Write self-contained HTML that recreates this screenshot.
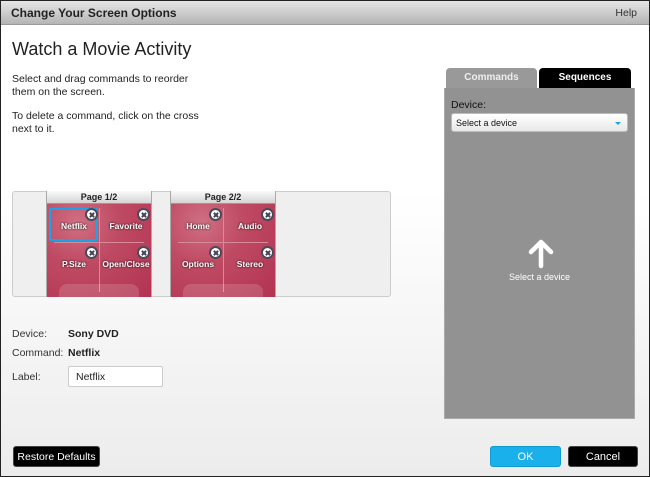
<!DOCTYPE html>
<html><head><meta charset="utf-8"><style>
*{margin:0;padding:0;box-sizing:border-box}
body{width:650px;height:477px;overflow:hidden;font-family:"Liberation Sans",Arial,sans-serif;background:#222}
#w{position:absolute;left:1px;top:1px;width:648px;height:475px;background:linear-gradient(#fff 0%,#fff 40%,#ececec 100%);overflow:hidden}
.a{position:absolute}
#tb{left:0;top:0;width:648px;height:24px;background:linear-gradient(#e6e6e6,#b4b4b4);border-bottom:1px solid #999}
.t{font-size:10.5px;color:#222}
.page{position:absolute;top:190px;width:106px;height:106px;border:1px solid #aaa;border-top:none}
.ph{position:absolute;left:0;top:0;width:104px;height:13px;background:linear-gradient(#fafafa,#d4d4d4);border-bottom:1px solid #999;font-size:9px;font-weight:bold;text-align:center;line-height:13px;color:#222}
.pr{position:absolute;left:0;top:13px;width:104px;height:93px;background:radial-gradient(ellipse at 30% 20%,#cf6f83 0%,#bf4a63 40%,#b23352 100%);overflow:hidden}
.lbl{position:absolute;color:#fff;font-size:8.5px;font-weight:bold;text-shadow:0 0 2px #000;width:52px;text-align:center}
.x{position:absolute;width:13px;height:13px;border-radius:50%;background:#fff;border:2px solid #4a4a5a;}
.x::before,.x::after{content:"";position:absolute;left:3.5px;top:1.5px;width:2px;height:6px;background:#445;transform:rotate(45deg)}
.x::after{transform:rotate(-45deg)}
.btn{position:absolute;height:21px;border-radius:3px;font-size:11px;text-align:center;line-height:21px}
</style></head><body><div id="w">
<div id="tb" class="a"><div class="a" style="left:10px;top:5px;font-size:12px;font-weight:bold;color:#222">Change Your Screen Options</div><div class="a" style="right:12px;top:6px;font-size:10.5px;color:#333">Help</div></div>
<div class="a" style="left:11px;top:38px;font-size:18px;color:#222">Watch a Movie Activity</div>
<div class="a t" style="left:11px;top:72px;line-height:13px">Select and drag commands to reorder<br>them on the screen.</div>
<div class="a t" style="left:11px;top:109px;line-height:13px">To delete a command, click on the cross<br>next to it.</div>
<div class="a" style="left:11px;top:190px;width:379px;height:106px;border:1px solid #ccc;border-radius:3px;background:#efefef"></div>
<div class="page" style="left:45px"><div class="ph">Page 1/2</div><div class="pr">
<div class="a" style="left:52px;top:4px;width:1px;height:84px;background:#d88a9a"></div>
<div class="a" style="left:7px;top:38px;width:90px;height:1px;background:#d88a9a"></div>
<div class="a" style="left:12px;top:80px;width:80px;height:20px;border-radius:8px;background:rgba(255,255,255,.15)"></div>
<div class="a" style="left:2px;top:4px;width:49px;height:33px;border:2px solid #1aa3e8;border-radius:2px"></div>
<div class="lbl" style="left:1px;top:17px">Netflix</div><div class="lbl" style="left:53px;top:17px">Favorite</div>
<div class="lbl" style="left:1px;top:55px">P.Size</div><div class="lbl" style="left:53px;top:55px">Open/Close</div>
<div class="x" style="left:38px;top:4px"></div><div class="x" style="left:90px;top:4px"></div>
<div class="x" style="left:38px;top:42px"></div><div class="x" style="left:90px;top:42px"></div>
</div></div>
<div class="page" style="left:169px"><div class="ph">Page 2/2</div><div class="pr">
<div class="a" style="left:52px;top:4px;width:1px;height:84px;background:#d88a9a"></div>
<div class="a" style="left:7px;top:38px;width:90px;height:1px;background:#d88a9a"></div>
<div class="a" style="left:12px;top:80px;width:80px;height:20px;border-radius:8px;background:rgba(255,255,255,.15)"></div>
<div class="lbl" style="left:1px;top:17px">Home</div><div class="lbl" style="left:53px;top:17px">Audio</div>
<div class="lbl" style="left:1px;top:55px">Options</div><div class="lbl" style="left:53px;top:55px">Stereo</div>
<div class="x" style="left:38px;top:4px"></div><div class="x" style="left:90px;top:4px"></div>
<div class="x" style="left:38px;top:42px"></div><div class="x" style="left:90px;top:42px"></div>
</div></div>
<div class="a t" style="left:11px;top:327px;color:#333">Device:</div><div class="a t" style="left:67px;top:327px;font-weight:bold">Sony DVD</div>
<div class="a t" style="left:11px;top:346px;color:#333">Command:</div><div class="a t" style="left:67px;top:346px;font-weight:bold">Netflix</div>
<div class="a t" style="left:11px;top:370px;color:#333">Label:</div>
<div class="a" style="left:67px;top:365px;width:95px;height:21px;background:#fff;border:1px solid #ccc;border-radius:2px"><div class="a t" style="left:7px;top:4px">Netflix</div></div>
<div class="btn" style="left:12px;top:445px;width:87px;background:#000;color:#fff;border:1px solid #444;font-size:10.5px">Restore Defaults</div>
<div class="btn" style="left:489px;top:445px;width:71px;background:#1ab0ec;color:#fff;border:1px solid #0f9ad0">OK</div>
<div class="btn" style="left:567px;top:445px;width:70px;background:#000;color:#fff;border:1px solid #444">Cancel</div>
<div class="a" style="left:445px;top:67px;width:91px;height:21px;background:#999;border-radius:4px 4px 0 0;color:#eee;font-size:10px;font-weight:bold;text-align:center;line-height:19px">Commands</div>
<div class="a" style="left:538px;top:67px;width:92px;height:21px;background:#000;border-radius:4px 4px 0 0;color:#fff;font-size:10px;font-weight:bold;text-align:center;line-height:19px">Sequences</div>
<div class="a" style="left:443px;top:87px;width:191px;height:331px;background:#929292;border:1px solid #aaa;border-top:none">
<div class="a" style="left:6px;top:11px;font-size:10.5px;color:#111">Device:</div>
<div class="a" style="left:6px;top:25px;width:177px;height:19px;background:linear-gradient(#fff,#e8e8e8);border:1px solid #bbb;border-radius:3px"><div class="a" style="left:4px;top:4px;font-size:9px;color:#111">Select a device</div><div class="a" style="right:6px;top:8px;width:0;height:0;border-left:3px solid transparent;border-right:3px solid transparent;border-top:3px solid #1aa3e8"></div></div>
<svg class="a" style="left:83px;top:151px" width="26" height="30" viewBox="0 0 26 30"><path d="M13 27V4M3 13L13 3L23 13" stroke="#fff" stroke-width="4.5" fill="none" stroke-linecap="round" stroke-linejoin="round"/></svg>
<div class="a" style="left:0;width:189px;top:184px;text-align:center;font-size:9px;color:#fff">Select a device</div>
</div>
</div></body></html>
